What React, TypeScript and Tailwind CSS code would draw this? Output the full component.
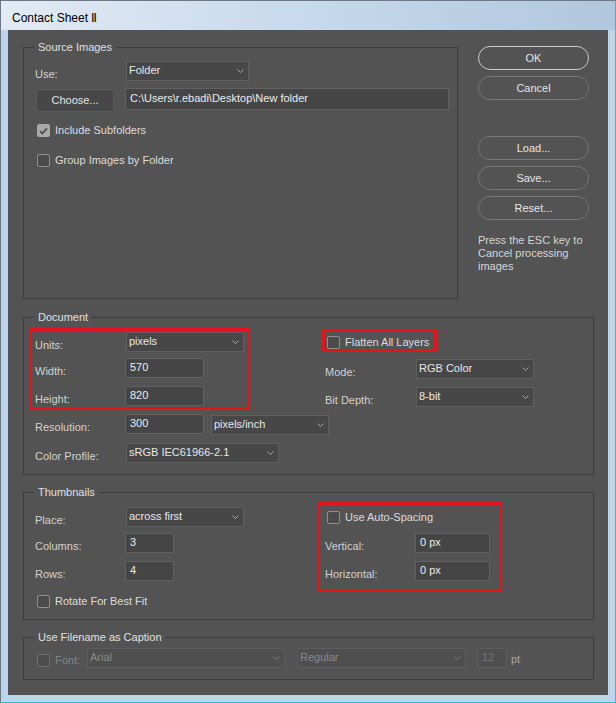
import type { ReactNode } from "react";
import { clsx } from "clsx";
import { twMerge } from "tailwind-merge";

function cn(...inputs: Parameters<typeof clsx>) {
  return twMerge(clsx(inputs));
}

function Chevron({ dim = false }: { dim?: boolean }) {
  return (
    <svg width="7" height="4" viewBox="0 0 7 4" className="shrink-0">
      <path d="M0.5 0.5L3.5 3.5L6.5 0.5" fill="none" stroke={dim ? "#7c7c7c" : "#a8a8a8"} strokeWidth="1" />
    </svg>
  );
}

function Select({ value, className, dim }: { value: string; className?: string; dim?: boolean }) {
  return (
    <div
      className={cn(
        "flex h-[20px] shrink-0 items-center justify-between border pl-[2px] pr-[4px]",
        dim ? "border-[#5c5c5c] bg-[#4f4f4f] text-[#8a8a8a]" : "border-[#606060] bg-[#474747] text-[#e8e8e8]",
        className,
      )}
    >
      <span className="-mt-px">{value}</span>
      <Chevron dim={dim} />
    </div>
  );
}

function Field({ value, className, dim }: { value: string; className?: string; dim?: boolean }) {
  return (
    <div
      className={cn(
        "flex h-[20px] shrink-0 items-center border pl-[4px]",
        dim ? "border-[#5c5c5c] bg-[#4f4f4f] text-[#767676]" : "border-[#616161] bg-[#454545] text-[#ececec]",
        className,
      )}
    >
      <span className="-mt-[2px]">{value}</span>
    </div>
  );
}

function Checkbox({ checked, dim }: { checked?: boolean; dim?: boolean }) {
  return (
    <span
      className={cn(
        "flex h-[13px] w-[13px] shrink-0 items-center justify-center rounded-[2px] border",
        checked
          ? "border-[#a9a9a9] bg-[#a9a9a9]"
          : dim
            ? "border-[#6e6e6e] bg-[#4d4d4d]"
            : "border-[#8f8f8f] bg-[#4b4b4b]",
      )}
    >
      {checked ? (
        <svg width="9" height="8" viewBox="0 0 9 8">
          <path d="M1 4.2L3.4 6.5L8 1.4" fill="none" stroke="#4c4c4c" strokeWidth="1.8" />
        </svg>
      ) : null}
    </span>
  );
}

function CheckItem({ label, checked, className }: { label: string; checked?: boolean; className?: string }) {
  return (
    <div className={cn("flex h-[13px] items-center gap-[5px] text-[#dcdcdc]", className)}>
      <Checkbox checked={checked} />
      <span>{label}</span>
    </div>
  );
}

// photoshop sits its labels a few px below the control's centre
function Label({ children, className }: { children: ReactNode; className?: string }) {
  return <span className={cn("shrink-0 translate-y-[3px] text-[#d2d2d2]", className)}>{children}</span>;
}

function Group({ title, className, children }: { title: string; className?: string; children: ReactNode }) {
  return (
    <div className={cn("relative shrink-0 border border-[#3c3c3c]", className)}>
      <span className="absolute -top-[8px] left-[10px] bg-[#535353] px-[4px] leading-[14px] text-[#e0e0e0]">
        {title}
      </span>
      {children}
    </div>
  );
}

function PillButton({ label, primary }: { label: string; primary?: boolean }) {
  return (
    <button
      className={cn(
        "h-[24px] w-[111px] rounded-full border bg-[#535353] text-[#e6e6e6]",
        primary ? "border-[#cbcbcb]" : "border-[#777777]",
      )}
    >
      {label}
    </button>
  );
}

function RedBox({ className }: { className: string }) {
  return <div className={cn("pointer-events-none absolute border-[3px] border-[#e5131c]", className)} />;
}

export default function App() {
  return (
    <div className="h-[703px] w-[616px] border border-t-[#6d7886] border-l-[#6d7886] border-r-[#2fbbe6] border-b-[#2fbbe6] bg-[#bdd4eb] font-['Liberation_Sans',Arial,sans-serif] text-[11px] leading-[13px]">
      <div className="h-[29px] bg-linear-to-r from-[#e2eaf3] via-[#c7d9ec] to-[#b0c7de] pl-[11px] pt-[10px] text-[12px] leading-[14px] text-black">
        Contact Sheet Ⅱ
      </div>

      <div className="pl-[7px] pr-[7px] pb-[7px]">
        <div className="h-[665px] w-[600px] bg-[#535353] pl-[15px] pt-[17px]">
          {/* source + dialog buttons */}
          <div className="flex">
            <Group title="Source Images" className="h-[252px] w-[435px]">
              <div className="pl-[11px] pt-[13px]">
                <div className="flex h-[20px] items-center">
                  <Label className="w-[91px]">Use:</Label>
                  <Select value="Folder" className="w-[123px]" />
                </div>
                <div className="mt-[7px] flex h-[24px] items-start">
                  <button className="ml-px mt-px h-[23px] w-[78px] rounded-[2px] border border-[#5a5a5a] bg-[#474747] text-[#e4e4e4]">
                    Choose...
                  </button>
                  <Field value={"C:\\Users\\r.ebadi\\Desktop\\New folder"} className="ml-[11px] h-[22px] w-[324px]" />
                </div>
                <CheckItem label="Include Subfolders" checked className="ml-[2px] mt-[12px]" />
                <CheckItem label="Group Images by Folder" className="ml-[2px] mt-[17px]" />
              </div>
            </Group>

            <div className="-mt-px ml-[20px] flex w-[111px] flex-col">
              <PillButton label="OK" primary />
              <div className="mt-[6px]">
                <PillButton label="Cancel" />
              </div>
              <div className="mt-[36px] flex flex-col gap-[6px]">
                <PillButton label="Load..." />
                <PillButton label="Save..." />
                <PillButton label="Reset..." />
              </div>
              <p className="mt-[14px] leading-[13px] text-[#d6d6d6]">
                Press the ESC key to
                <br />
                Cancel processing
                <br />
                images
              </p>
            </div>
          </div>

          {/* document */}
          <Group title="Document" className="mt-[18px] h-[158px] w-[571px]">
            <RedBox className="left-[5px] top-[10px] h-[82px] w-[221px]" />
            <RedBox className="left-[298px] top-[11px] h-[23px] w-[115px]" />
            <div className="pl-[11px] pt-[14px]">
              <div className="flex h-[20px] items-center">
                <div className="flex w-[290px] items-center">
                  <Label className="w-[91px]">Units:</Label>
                  <Select value="pixels" className="w-[118px]" />
                </div>
                <CheckItem label="Flatten All Layers" className="ml-[2px]" />
              </div>
              <div className="mt-[6px] flex h-[20px] items-start">
                <div className="flex w-[290px] items-center">
                  <Label className="w-[90px]">Width:</Label>
                  <Field value="570" className="w-[79px]" />
                </div>
                <div className="mt-px flex items-center">
                  <Label className="w-[91px]">Mode:</Label>
                  <Select value="RGB Color" className="w-[118px]" />
                </div>
              </div>
              <div className="mt-[8px] flex h-[20px] items-start">
                <div className="flex w-[290px] items-center">
                  <Label className="w-[90px]">Height:</Label>
                  <Field value="820" className="w-[79px]" />
                </div>
                <div className="mt-px flex items-center">
                  <Label className="w-[91px]">Bit Depth:</Label>
                  <Select value="8-bit" className="w-[118px]" />
                </div>
              </div>
              <div className="mt-[8px] flex h-[20px] items-start">
                <div className="flex h-[20px] items-center">
                  <Label className="w-[90px]">Resolution:</Label>
                  <Field value="300" className="w-[79px]" />
                </div>
                <Select value="pixels/inch" className="ml-[7px] mt-px w-[118px]" />
              </div>
              <div className="mt-[9px] flex h-[20px] items-center">
                <Label className="w-[91px]">Color Profile:</Label>
                <Select value="sRGB IEC61966-2.1" className="w-[153px]" />
              </div>
            </div>
          </Group>

          {/* thumbnails */}
          <Group title="Thumbnails" className="mt-[17px] h-[128px] w-[571px]">
            <RedBox className="left-[293px] top-[9px] h-[90px] w-[185px]" />
            <div className="pl-[11px] pt-[14px]">
              <div className="flex h-[20px] items-center">
                <div className="flex w-[290px] items-center">
                  <Label className="w-[91px]">Place:</Label>
                  <Select value="across first" className="w-[118px]" />
                </div>
                <CheckItem label="Use Auto-Spacing" className="ml-[2px]" />
              </div>
              <div className="mt-[6px] flex h-[20px] items-center">
                <div className="flex w-[290px] items-center">
                  <Label className="w-[90px]">Columns:</Label>
                  <Field value="3" className="w-[49px]" />
                </div>
                <div className="flex items-center">
                  <Label className="w-[90px]">Vertical:</Label>
                  <Field value="0 px" className="w-[75px]" />
                </div>
              </div>
              <div className="mt-[8px] flex h-[20px] items-center">
                <div className="flex w-[290px] items-center">
                  <Label className="w-[90px]">Rows:</Label>
                  <Field value="4" className="w-[49px]" />
                </div>
                <div className="flex items-center">
                  <Label className="w-[90px]">Horizontal:</Label>
                  <Field value="0 px" className="w-[75px]" />
                </div>
              </div>
              <CheckItem label="Rotate For Best Fit" className="ml-[2px] mt-[14px]" />
            </div>
          </Group>

          {/* caption */}
          <Group title="Use Filename as Caption" className="mt-[17px] h-[43px] w-[571px]">
            <div className="flex h-[20px] items-center pl-[13px] mt-[10px]">
              <span className="translate-y-[2px]">
                <Checkbox dim />
              </span>
              <span className="ml-[5px] w-[32px] translate-y-[2px] text-[#858585]">Font:</span>
              <Select value="Arial" dim className="w-[198px]" />
              <Select value="Regular" dim className="ml-[12px] w-[169px]" />
              <Field value="12" dim className="ml-[11px] w-[30px]" />
              <span className="ml-[4px] translate-y-px text-[#a6a6a6]">pt</span>
            </div>
          </Group>
        </div>
      </div>
    </div>
  );
}
